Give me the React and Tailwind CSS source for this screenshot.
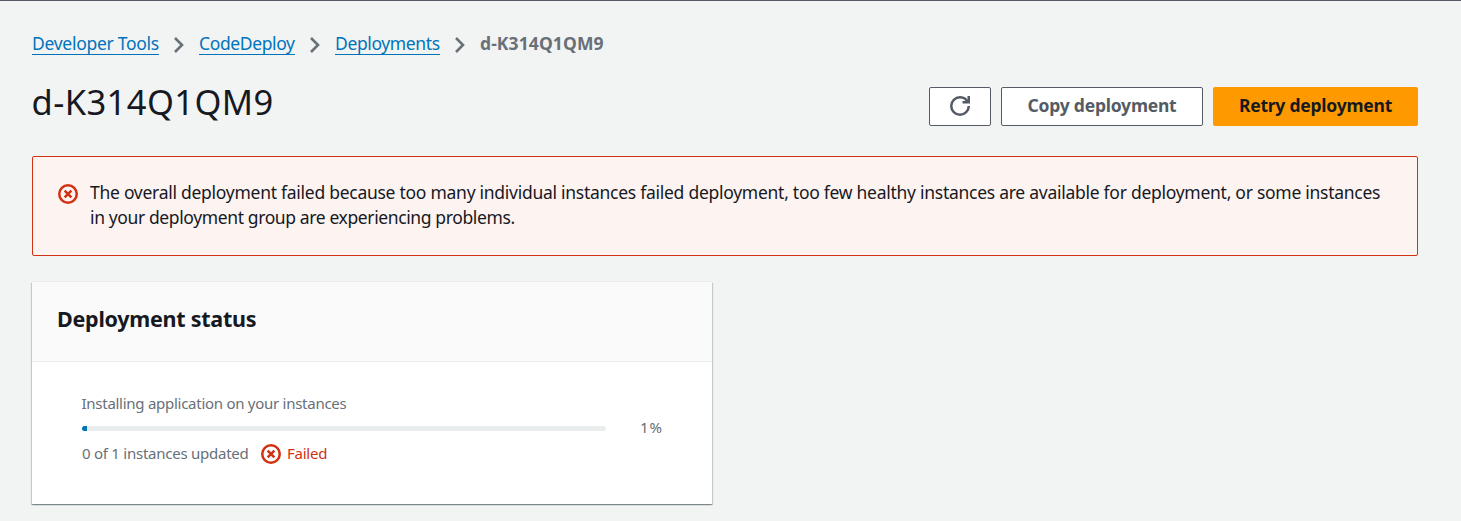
const crumbs = [
  { label: "Developer Tools", cls: "w-[127px] tracking-[-0.28px]" },
  { label: "CodeDeploy", cls: "w-[96px] tracking-[-0.37px]" },
  { label: "Deployments", cls: "w-[105px] tracking-[-0.37px]" },
];

function Chevron() {
  return (
    <svg className="mx-3 mt-[5px] size-4 shrink-0" viewBox="0 0 16 16" fill="none" stroke="#687078" strokeWidth="2.6">
      <path d="M4 1l7 7-7 7" />
    </svg>
  );
}

function ErrorIcon({ className }) {
  return (
    <svg className={className} viewBox="0 0 16 16" fill="none" stroke="#d13212" strokeWidth="2">
      <circle cx="8" cy="8" r="7" />
      <path d="M5.3 5.3l5.4 5.4M10.7 5.3l-5.4 5.4" />
    </svg>
  );
}

function Breadcrumbs() {
  return (
    <nav className="flex h-[23px] items-start text-[17.5px] leading-[22px] whitespace-nowrap">
      {crumbs.map((c) => (
        <div key={c.label} className="flex">
          <a className={`h-[23px] border-b border-[#0073bb] text-[#0073bb] ${c.cls}`}>{c.label}</a>
          <Chevron />
        </div>
      ))}
      <span className="font-bold tracking-[0.1px] text-[#687078]">d-K314Q1QM9</span>
    </nav>
  );
}

function Header() {
  return (
    <div className="mt-6 flex h-[47px] items-end justify-between">
      <h1 className="mb-[2px] -ml-[0.5px] text-[34.5px] leading-[44px] tracking-[0.42px] text-[#16191f]">d-K314Q1QM9</h1>
      <div className="flex gap-2.5 text-[17.5px] font-bold tracking-[-0.22px] whitespace-nowrap">
        <button className="flex h-[39px] w-[62px] items-center justify-center rounded-xs border border-[#545b64] bg-white pb-px">
          <svg className="size-5" viewBox="0 0 16 16" fill="none" stroke="#545b64" strokeWidth="2">
            <path d="M10 5h5V0" />
            <path d="M15 8a6.957 6.957 0 0 1-7 7 6.957 6.957 0 0 1-7-7 6.957 6.957 0 0 1 7-7 6.87 6.87 0 0 1 6.3 4" />
          </svg>
        </button>
        <button className="flex h-[39px] w-[202px] items-center justify-center rounded-xs border border-[#545b64] bg-white pb-[2px] text-[#545b64]">
          Copy deployment
        </button>
        <button className="flex h-[39px] w-[205px] items-center justify-center rounded-xs bg-[#ff9900] pb-[2px] text-[#16191f]">
          Retry deployment
        </button>
      </div>
    </div>
  );
}

function Alert() {
  return (
    <div className="mt-[30px] flex h-[100px] rounded-xs border border-[#d13212] bg-[#fdf3f1] pt-[23px] pl-[25px] text-[17.5px] leading-[25px] whitespace-nowrap text-[#16191f]">
      <ErrorIcon className="mt-1 mr-3 size-5 shrink-0" />
      <p>
        <span className="block tracking-[-0.27px]">
          The overall deployment failed because too many individual instances failed deployment, too few healthy instances are available for deployment, or some instances
        </span>
        <span className="block tracking-[-0.38px]">in your deployment group are experiencing problems.</span>
      </p>
    </div>
  );
}

function StatusCard() {
  return (
    <section className="mt-[26px] h-[222px] w-[680px] bg-white shadow-[0_1px_1px_0_rgba(0,28,36,0.3),1px_1px_1px_0_rgba(0,28,36,0.15),-1px_1px_1px_0_rgba(0,28,36,0.15),0_-1px_0_0_#eaeded]">
      <div className="h-20 border-b border-[#eaeded] bg-[#fafafa] pt-[23px] pl-[25px]">
        <h2 className="text-[21.5px] leading-[28px] font-bold tracking-[-0.26px] text-[#16191f]">Deployment status</h2>
      </div>
      <div className="px-[50px] pt-[31px] text-[15px] leading-[20px] whitespace-nowrap text-[#687078]">
        <div className="-ml-[0.5px] tracking-[-0.27px]">Installing application on your instances</div>
        <div className="mt-[5px] flex h-5 items-center">
          <div className="h-[5px] w-[524px] shrink-0 overflow-hidden rounded-full bg-[#eaeded]">
            <div className="h-full w-[5px] bg-[#0073bb]" />
          </div>
          <span className="mb-[2px] ml-[34px] text-[15px] tracking-[0.9px]">1%</span>
        </div>
        <div className="mt-[5px] flex">
          <span className="w-[167px] tracking-[-0.25px]">0 of 1 instances updated</span>
          <ErrorIcon className="mt-px ml-3 size-5 shrink-0" />
          <span className="ml-1.5 tracking-[-0.25px] text-[#d13212]">Failed</span>
        </div>
      </div>
    </section>
  );
}

export default function App() {
  return (
    <main className="h-[521px] overflow-hidden border-t border-[#545b64] bg-[#f2f3f3] pt-[31px] pr-[43px] pl-8 font-['Noto_Sans','Open_Sans',sans-serif]">
      <Breadcrumbs />
      <Header />
      <Alert />
      <StatusCard />
    </main>
  );
}
